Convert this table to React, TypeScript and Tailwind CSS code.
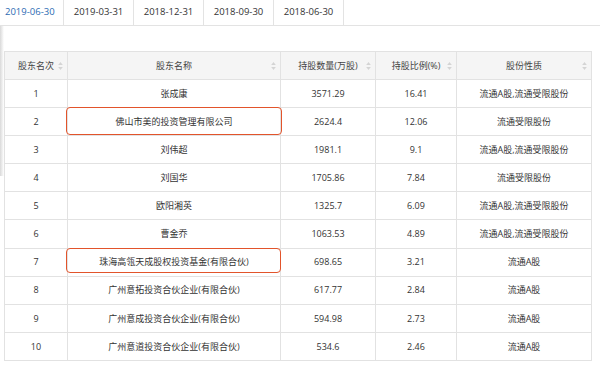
import React from "react";

const tabs = ["2019-06-30", "2019-03-31", "2018-12-31", "2018-09-30", "2018-06-30"];

const rows = [
  { rank: 1, name: "张成康", qty: "3571.29", pct: "16.41", kind: "流通A股,流通受限股份" },
  { rank: 2, name: "佛山市美的投资管理有限公司", qty: "2624.4", pct: "12.06", kind: "流通受限股份", mark: "full" },
  { rank: 3, name: "刘伟超", qty: "1981.1", pct: "9.1", kind: "流通A股,流通受限股份" },
  { rank: 4, name: "刘国华", qty: "1705.86", pct: "7.84", kind: "流通受限股份" },
  { rank: 5, name: "欧阳湘英", qty: "1325.7", pct: "6.09", kind: "流通A股,流通受限股份" },
  { rank: 6, name: "曹金乔", qty: "1063.53", pct: "4.89", kind: "流通A股,流通受限股份" },
  { rank: 7, name: "珠海高瓴天成股权投资基金(有限合伙)", qty: "698.65", pct: "3.21", kind: "流通A股", mark: "short" },
  { rank: 8, name: "广州意拓投资合伙企业(有限合伙)", qty: "617.77", pct: "2.84", kind: "流通A股" },
  { rank: 9, name: "广州意成投资合伙企业(有限合伙)", qty: "594.98", pct: "2.73", kind: "流通A股" },
  { rank: 10, name: "广州意道投资合伙企业(有限合伙)", qty: "534.6", pct: "2.46", kind: "流通A股" },
];

const headers = [
  { label: "股东名次", w: "w-[63px]" },
  { label: "股东名称", w: "w-[213px]" },
  { label: "持股数量(万股)", w: "w-[95px]" },
  { label: "持股比例(%)", w: "w-[81px]" },
  { label: "股份性质", w: "w-[135px]" },
];

function SortIcon() {
  return (
    <svg width="5" height="9" viewBox="0 0 5 9" className="absolute right-[4px] top-1/2 -translate-y-1/2">
      <path d="M2.5 0.5 L4.8 3.6 H0.2 Z" fill="#d4d4d4" />
      <path d="M2.5 8.5 L4.8 5.4 H0.2 Z" fill="#d4d4d4" />
    </svg>
  );
}

export default function App() {
  return (
    <div
      className="relative w-[600px] h-[373px] bg-white overflow-hidden text-[#333]"
      style={{ fontFamily: '"Open Sans", "Noto Sans CJK SC", sans-serif' }}
    >
      {/* faint shade at left edge */}
      <div className="absolute left-0 top-[26px] w-[4px] h-[150px] bg-gradient-to-r from-[#d9d9d9] to-transparent" />

      <div className="flex h-[26px] border-b border-[#e3e3e3] text-[9.5px]">
        {tabs.map((t, i) => (
          <div
            key={t}
            className={
              i === 0
                ? "w-[64px] flex items-center pl-[5px] text-[#2d6bb3] border-r border-[#e3e3e3]"
                : "w-[70px] flex items-center justify-center border-r border-[#e3e3e3]"
            }
          >
            {t}
          </div>
        ))}
      </div>

      <div className="pl-[4px] pt-[25px]">
        <table className="table-fixed border-collapse text-[9px] w-[587px]">
          <thead>
            <tr className="h-[28px] bg-[#f5f5f5] text-[#444]">
              {headers.map((h) => (
                <th key={h.label} className={`${h.w} relative font-normal border border-[#e2e2e2] p-0`}>
                  {h.label}
                  <SortIcon />
                </th>
              ))}
            </tr>
          </thead>
          <tbody>
            {rows.map((r) => (
              <tr key={r.rank} className="h-[28.1px]">
                <td className="border border-[#e2e2e2] text-center p-0">{r.rank}</td>
                <td className="relative border border-[#e2e2e2] text-center p-0">
                  {r.name}
                  {r.mark === "full" && (
                    <div className="absolute left-[-2px] right-[-2px] top-[-1px] bottom-[0px] border-[1.5px] border-[#e2542b] rounded-[4px]" />
                  )}
                  {r.mark === "short" && (
                    <div className="absolute left-[-2px] right-[-1px] top-[-1px] bottom-[3px] border-[1.5px] border-[#e2542b] rounded-[4px]" />
                  )}
                </td>
                <td className="border border-[#e2e2e2] text-center p-0">{r.qty}</td>
                <td className="border border-[#e2e2e2] text-center p-0">{r.pct}</td>
                <td className="border border-[#e2e2e2] text-center p-0">{r.kind}</td>
              </tr>
            ))}
          </tbody>
        </table>
      </div>
    </div>
  );
}
